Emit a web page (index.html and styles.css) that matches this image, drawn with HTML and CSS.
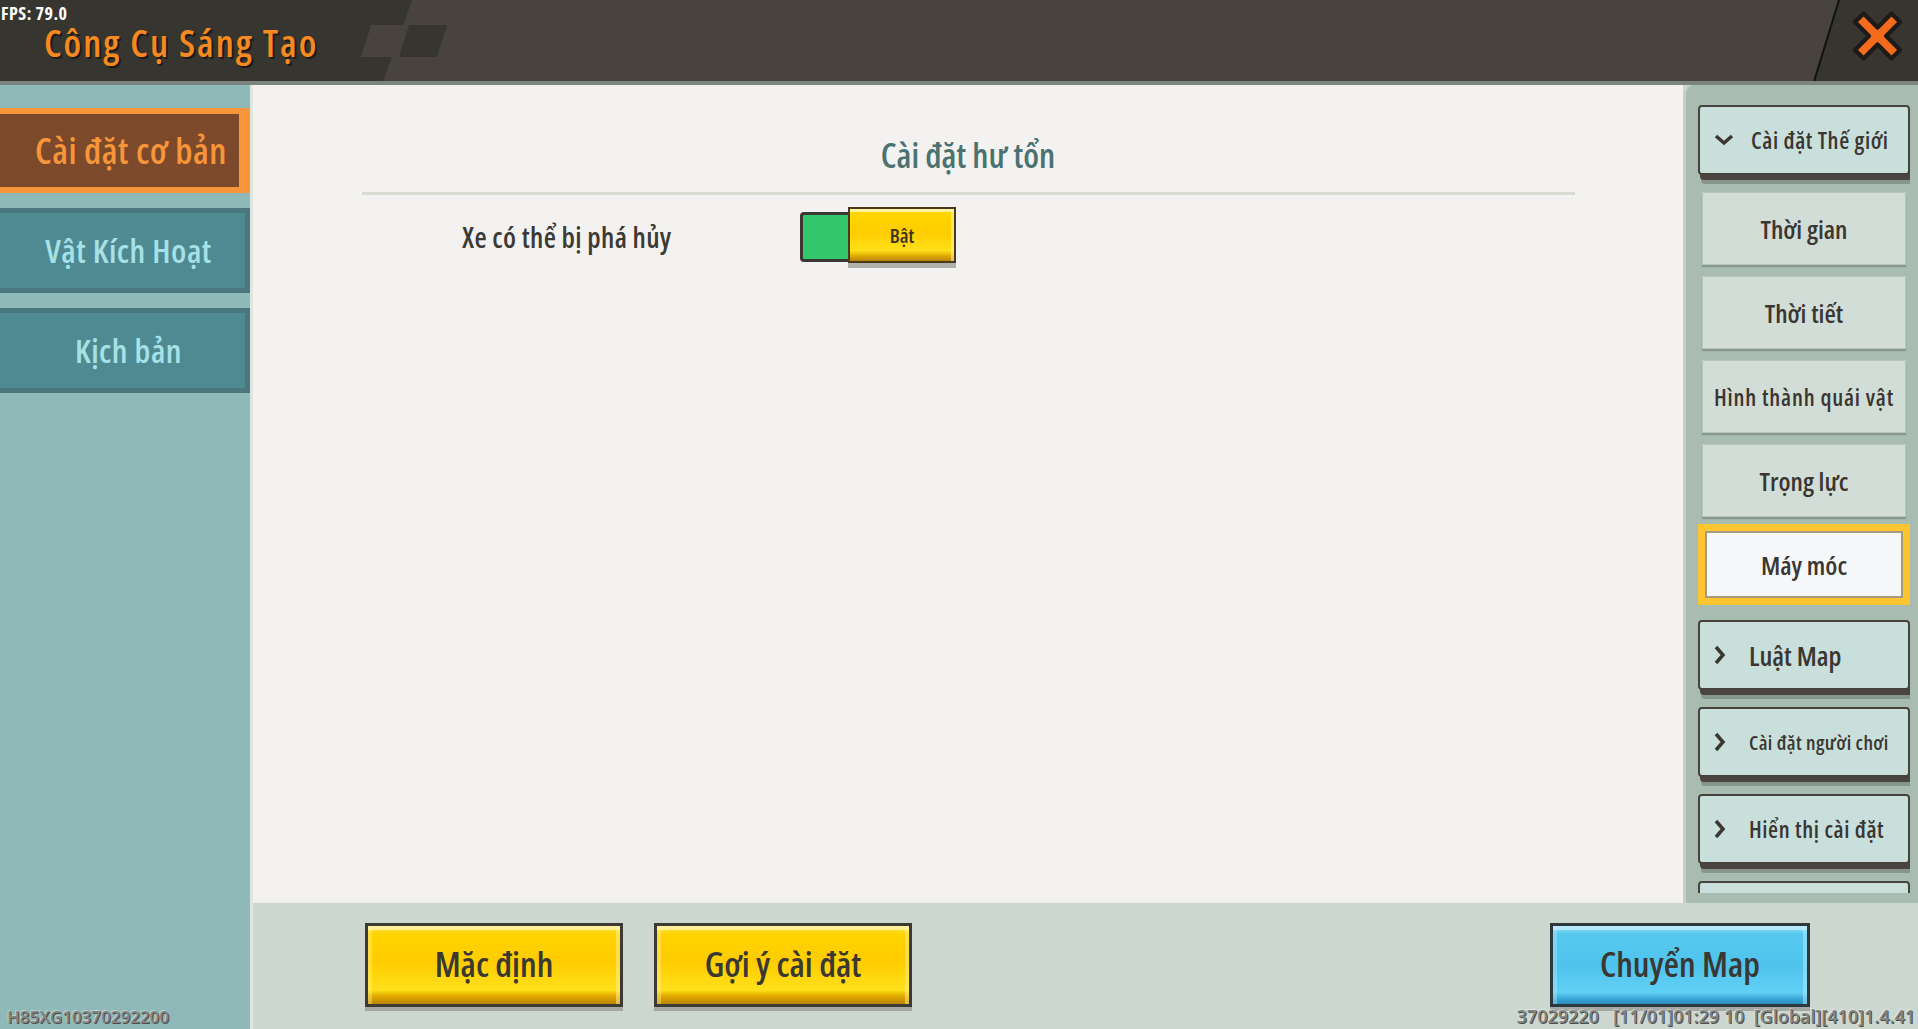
FILE: index.html
```html
<!DOCTYPE html>
<html lang="vi">
<head>
  <meta charset="UTF-8">
  <meta name="viewport" content="width=device-width, initial-scale=1.0">
  <title>Công Cụ Sáng Tạo</title>
  <link rel="stylesheet" href="styles.css">
</head>
<body>
  <div class="screen">
    <header class="topbar">
      <div class="topbar-left">
        <h1 class="title">Công Cụ Sáng Tạo</h1>
      </div>
      <div class="deco">
        <span class="deco-a"></span>
        <span class="deco-b"></span>
      </div>
      <div class="topbar-mid"></div>
      <div class="topbar-right">
        <button class="close-btn" aria-label="Đóng">
          <svg width="58" height="58" viewBox="0 0 54 54">
            <path d="M6 14 L14 6 L27 19 L40 6 L48 14 L35 27 L48 40 L40 48 L27 35 L14 48 L6 40 L19 27 Z"
                  fill="#f46b1e" stroke="#1d1a17" stroke-width="4" stroke-linejoin="round"/>
          </svg>
        </button>
      </div>
    </header>

    <div class="body-row">
      <nav class="sidebar">
        <div class="side-tab active"><span>Cài đặt cơ bản</span></div>
        <div class="side-tab"><span>Vật Kích Hoạt</span></div>
        <div class="side-tab"><span>Kịch bản</span></div>
      </nav>

      <div class="workspace">
        <div class="panel-row">
          <main class="content">
            <h2 class="section-title">Cài đặt hư tổn</h2>
            <div class="divider"></div>
            <div class="setting">
              <span class="setting-label">Xe có thể bị phá hủy</span>
              <div class="toggle">
                <span class="toggle-track"></span>
                <span class="toggle-knob">Bật</span>
              </div>
            </div>
          </main>

          <aside class="categories">
            <div class="cat-list">
              <div class="cat-group open">
                <svg class="chev" width="20" height="12" viewBox="0 0 20 12"><path d="M2 2 L10 9 L18 2" fill="none" stroke="#3b3631" stroke-width="3.5"/></svg>
                <span class="cat-small">Cài đặt Thế giới</span>
              </div>
              <div class="cat-item">Thời gian</div>
              <div class="cat-item">Thời tiết</div>
              <div class="cat-item cat-item-small">Hình thành quái vật</div>
              <div class="cat-item">Trọng lực</div>
              <div class="cat-item selected"><span>Máy móc</span></div>
              <div class="cat-group">
                <svg class="chev" width="12" height="20" viewBox="0 0 12 20"><path d="M2 2 L9 10 L2 18" fill="none" stroke="#3b3631" stroke-width="3.5"/></svg>
                <span class="cat-big">Luật Map</span>
              </div>
              <div class="cat-group">
                <svg class="chev" width="12" height="20" viewBox="0 0 12 20"><path d="M2 2 L9 10 L2 18" fill="none" stroke="#3b3631" stroke-width="3.5"/></svg>
                <span class="cat-tiny">Cài đặt người chơi</span>
              </div>
              <div class="cat-group">
                <svg class="chev" width="12" height="20" viewBox="0 0 12 20"><path d="M2 2 L9 10 L2 18" fill="none" stroke="#3b3631" stroke-width="3.5"/></svg>
                <span class="cat-small">Hiển thị cài đặt</span>
              </div>
              <div class="cat-group"></div>
            </div>
          </aside>
        </div>

        <footer class="actions">
          <button class="btn btn-yellow">Mặc định</button>
          <button class="btn btn-yellow">Gợi ý cài đặt</button>
          <span class="spacer"></span>
          <button class="btn btn-blue">Chuyển Map</button>
        </footer>
      </div>
    </div>

    <div class="fps">FPS: 79.0</div>
    <div class="build-id">H85XG10370292200</div>
    <div class="build-info">37029220&nbsp;&nbsp;&nbsp;[11/01]01:29 10&nbsp;&nbsp;[Global][410]1.4.41</div>
  </div>
</body>
</html>
```

FILE: styles.css
```css
:root {
  --ink: #3a3732;
  --header-dark: #363530;
  --header-mid: #48433e;
  --side-bg: #8fb8b8;
  --panel-bg: #f3f2f0;
  --bottom-bg: #cbd7cf;
  --cat-bg: #a9bcb1;
}

* {
  box-sizing: border-box;
  margin: 0;
  padding: 0;
}

body {
  width: 1918px;
  height: 1029px;
  overflow: hidden;
  font-family: "Open Sans", "DejaVu Sans", sans-serif;
  font-stretch: 75%;
  font-weight: 600;
  color: var(--ink);
}

.screen {
  position: relative;
  width: 1918px;
  height: 1029px;
  display: flex;
  flex-direction: column;
}

/* top bar */
.topbar {
  position: relative;
  height: 85px;
  display: flex;
  background: var(--header-mid);
  border-bottom: 4px solid #7b847f;
  overflow: hidden;
}

.topbar-left {
  width: 412px;
  background: var(--header-dark);
  clip-path: polygon(0 0, 100% 0, 93% 100%, 0 100%);
  display: flex;
  align-items: center;
  padding-left: 44px;
}

.title {
  font-size: 38px;
  line-height: 1;
  font-weight: 600;
  letter-spacing: 2px;
  color: #f6891f;
  text-shadow: 2px 2px 0 #1e1c19;
  margin-top: 2px;
  white-space: nowrap;
}

.deco {
  position: absolute;
  left: 366px;
  top: 25px;
  display: flex;
}

.deco span {
  display: block;
  width: 38px;
  height: 32px;
  transform: skewX(-18deg);
}

.deco-a { background: #48433e; }
.deco-b { background: #363530; }

.topbar-mid {
  flex: 1;
}

.topbar-right {
  width: 110px;
  background: var(--header-dark);
  border-left: 2px solid #111;
  transform: skewX(-17deg);
  transform-origin: top left;
  margin-right: -30px;
  display: flex;
  align-items: center;
  justify-content: flex-start;
  padding-left: 20px;
}

.close-btn {
  background: none;
  border: none;
  transform: skewX(17deg);
  margin-top: -6px;
}

/* body */
.body-row {
  flex: 1;
  display: flex;
  min-height: 0;
}

.sidebar {
  width: 250px;
  background: var(--side-bg);
  padding-top: 23px;
  display: flex;
  flex-direction: column;
  gap: 15px;
}

.side-tab {
  height: 85px;
  background: #4f8a93;
  border: 5px solid #4b7880;
  border-left: none;
  display: flex;
  align-items: center;
  justify-content: center;
  padding-left: 12px;
  font-size: 33px;
  letter-spacing: 0.5px;
  color: #a5e1e6;
  overflow: hidden;
  white-space: nowrap;
}

.side-tab.active {
  background: #7c4a2b;
  border-color: #f7953a;
  border-width: 6px 11px 6px 0;
  justify-content: flex-start;
  padding-left: 35px;
  color: #f6953a;
  font-size: 36px;
}

.side-tab.active span {
  display: block;
  width: 198px;
  overflow: hidden;
}

.workspace {
  flex: 1;
  display: flex;
  flex-direction: column;
  background: var(--bottom-bg);
  border-left: 3px solid #dfe6e0;
}

.panel-row {
  height: 818px;
  display: flex;
}

.content {
  flex: 1;
  background: var(--panel-bg);
  border-bottom: 3px solid #eef0ec;
  display: flex;
  flex-direction: column;
  align-items: center;
  padding-top: 46px;
}

.section-title {
  font-size: 34px;
  font-weight: 600;
  line-height: 48px;
  color: #4b7271;
}

.divider {
  width: 1213px;
  height: 3px;
  background: #d6ddd0;
  margin-top: 13px;
}

.setting {
  align-self: flex-start;
  margin-left: 209px;
  margin-top: 12px;
  display: flex;
  align-items: center;
}

.setting-label {
  font-size: 28px;
  letter-spacing: 0.3px;
  width: 338px;
  color: #3c3a36;
}

.toggle {
  display: flex;
  align-items: flex-start;
  height: 60px;
}

.toggle-track {
  width: 52px;
  height: 50px;
  margin-top: 5px;
  background: #33c86b;
  border: 3px solid #3b3834;
  border-right: none;
  border-radius: 4px 0 0 4px;
}

.toggle-knob {
  width: 108px;
  height: 56px;
  display: flex;
  align-items: center;
  justify-content: center;
  font-size: 20px;
  color: #3a342b;
  border: 2px solid #4a3a1c;
  background: linear-gradient(180deg, #ffd800 0%, #ffcc00 45%, #ffe019 80%, #d9a000 92%, #b8860b 100%);
  box-shadow: inset 0 3px 0 #fff3a0, inset -3px 0 0 rgba(255, 250, 200, 0.5), 0 5px 0 #b0b0ab;
  margin-left: -4px;
}

/* right category column */
.categories {
  width: 235px;
  background: var(--cat-bg);
  border-left: 3px solid #c4d0c8;
  border-top-left-radius: 10px;
  padding: 20px 8px 0 12px;
  overflow: hidden;
}

.cat-list {
  height: 788px;
  overflow: hidden;
  display: flex;
  flex-direction: column;
  gap: 11px;
}

.cat-group {
  flex: none;
  height: 70px;
  background: #c9dfdb;
  border: 2px solid #47423c;
  border-radius: 4px;
  box-shadow: 2px 5px 0 #4a453f, 3px 9px 0 rgba(70, 80, 70, 0.35);
  display: flex;
  align-items: center;
  padding-left: 14px;
  gap: 23px;
  margin-bottom: 6px;
}

.cat-group.open {
  gap: 17px;
}

.cat-small { font-size: 23px; letter-spacing: 0.6px; }
.cat-tiny { font-size: 20px; letter-spacing: 0.4px; }
.cat-big { font-size: 27px; }

.cat-item {
  flex: none;
  height: 73px;
  margin: 0 4px;
  background: #d3ddd7;
  border: 1px solid #b9c4bd;
  box-shadow: 0 2px 1px rgba(60, 70, 60, 0.3);
  display: flex;
  align-items: center;
  justify-content: center;
  font-size: 26px;
}

.cat-item-small {
  font-size: 23px;
  letter-spacing: 0.8px;
}

.cat-item.selected {
  height: 81px;
  margin: -4px 0 4px;
  background: #f6f7f9;
  border: 7px solid #ffc531;
  box-shadow: inset 0 0 0 2px #a89a80;
  font-size: 26px;
}

/* bottom action bar */
.actions {
  flex: 1;
  display: flex;
  align-items: flex-start;
  padding: 20px 108px 0 112px;
  gap: 31px;
}

.spacer {
  flex: 1;
}

.btn {
  height: 84px;
  border: 3px solid #3d3a34;
  font-family: inherit;
  font-stretch: 75%;
  font-weight: 600;
  font-size: 35px;
  color: #3a3832;
  padding-bottom: 4px;
}

.btn-yellow {
  width: 258px;
  background: linear-gradient(180deg, #ffe566 0%, #ffd400 10%, #ffcc00 45%, #ffe01a 82%, #e3a900 90%, #b98600 100%);
  box-shadow: inset 0 4px 0 rgba(255, 245, 170, 0.8), inset -4px 0 0 rgba(255, 240, 150, 0.5), inset 4px 0 0 rgba(255, 240, 150, 0.4), 0 4px 0 #a4a8a3;
}

.btn-blue {
  width: 260px;
  border-color: #2d393e;
  background: linear-gradient(180deg, #9ce3f8 0%, #57c9ef 10%, #4fc3ec 50%, #62d0f5 85%, #3aa8d6 93%, #2a8fbf 100%);
  box-shadow: inset 0 4px 0 rgba(200, 240, 255, 0.7), inset -4px 0 0 rgba(180, 235, 255, 0.5), inset 4px 0 0 rgba(180, 235, 255, 0.4), 0 4px 0 #a4a8a3;
}

/* overlays */
.fps {
  position: absolute;
  left: 1px;
  top: 4px;
  font-size: 18px;
  line-height: 1;
  letter-spacing: 0.5px;
  color: #fff;
  font-weight: 700;
}

.build-id,
.build-info {
  position: absolute;
  bottom: 1px;
  font-size: 18px;
  font-stretch: 100%;
  font-weight: 600;
  color: #858582;
  text-shadow: 1px 1px 0 #4c4c4a, -1px -1px 0 rgba(255, 255, 255, 0.4);
}

.build-id {
  left: 7px;
  font-size: 17px;
}

.build-info {
  right: 3px;
}
```
